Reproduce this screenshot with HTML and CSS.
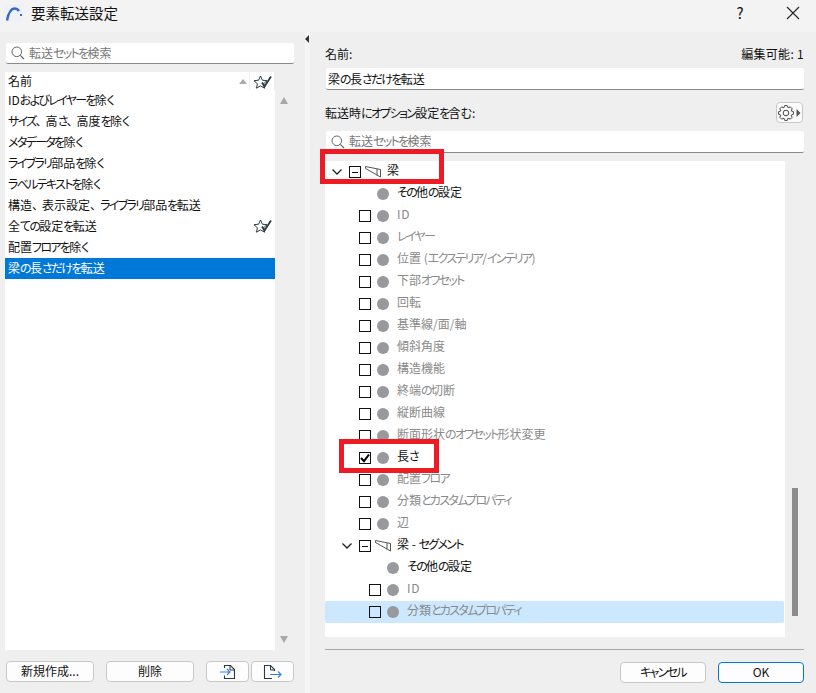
FILE: index.html
```html
<!DOCTYPE html>
<html lang="ja">
<head>
<meta charset="utf-8">
<title>要素転送設定</title>
<link rel="stylesheet" href="styles.css">
</head>
<body>
<div class="dialog">
  <header class="titlebar">
    <svg class="logo" width="18" height="18" viewBox="0 0 18 18"><rect width="18" height="18" fill="#eef1f8"/><path d="M2 16.500C3.500 9 6 4.500 9.500 4.500c2 0 3.500 1 4.500 2.500" fill="none" stroke="#3a66c4" stroke-width="2.400"/><rect x="15" y="10" width="2" height="2" fill="#3a66c4"/></svg>
    <span class="title">要素転送設定</span>
    <span class="help">?</span>
    <svg class="close" width="14" height="14" viewBox="0 0 14 14"><path d="M1 1l12 12M13 1L1 13" stroke="#222" stroke-width="1.100" fill="none"/></svg>
  </header>
  <main class="main">
    <section class="left">
      <div class="search left-search">
        <svg class="mag" width="14" height="14" viewBox="0 0 14 14"><circle cx="5.800" cy="5.800" r="4.800" fill="none" stroke="#666"/><path d="M9.300 9.300L13 13" stroke="#666" stroke-width="1.200"/></svg>
        <span>転送<span class="k">セットを</span>検索</span>
      </div>
      <div class="list-wrap">
        <div class="list-head">
          <div class="head-name"><span>名前</span><i class="sort"></i></div>
          <div class="head-star">
            <svg width="20" height="14" viewBox="0 0 20 14"><path d="M7.500 1l1.900 4.200 4.600.5-3.400 3 .9 4.500-4-2.300-4 2.300.9-4.500-3.400-3 4.600-.5z" fill="#fff" stroke="#2b3a42"/><path d="M9 7.500l2.500 4L18 1.500" fill="none" stroke="#2b3a42" stroke-width="1.800"/></svg>
          </div>
        </div>
        <div class="list-body-row">
          <ul class="list">
            <li><span>ID<span class="k">およびレイヤーを</span>除<span class="k">く</span></span></li>
            <li><span><span class="k">サイズ</span><span class="c">、</span>高<span class="k">さ</span><span class="c">、</span>高度<span class="k">を</span>除<span class="k">く</span></span></li>
            <li><span><span class="k">メタデータを</span>除<span class="k">く</span></span></li>
            <li><span><span class="k">ライブラリ</span>部品<span class="k">を</span>除<span class="k">く</span></span></li>
            <li><span><span class="k">ラベルテキストを</span>除<span class="k">く</span></span></li>
            <li><span>構造<span class="c">、</span>表示設定<span class="c">、</span><span class="k">ライブラリ</span>部品<span class="k">を</span>転送</span></li>
            <li class="with-star"><span>全<span class="k">ての</span>設定<span class="k">を</span>転送</span>
              <svg width="20" height="14" viewBox="0 0 20 14"><path d="M7.500 1l1.900 4.200 4.600.5-3.400 3 .9 4.500-4-2.300-4 2.300.9-4.500-3.400-3 4.600-.5z" fill="#fff" stroke="#2b3a42"/><path d="M9 7.500l2.500 4L18 1.500" fill="none" stroke="#2b3a42" stroke-width="1.800"/></svg>
            </li>
            <li><span>配置<span class="k">フロアを</span>除<span class="k">く</span></span></li>
            <li class="selected"><span>梁<span class="k">の</span>長<span class="k">さだけを</span>転送</span></li>
          </ul>
          <div class="list-scroll"><i class="arrow-up"></i><i class="arrow-down"></i></div>
        </div>
      </div>
      <div class="left-buttons">
        <button class="btn btn-wide"><span class="t">新規作成...</span></button>
        <button class="btn btn-wide btn-del"><span class="t">削除</span></button>
        <button class="btn btn-icon btn-import">
          <svg width="18" height="16" viewBox="0 0 18 16"><path d="M5.500 4V1.500h6l4 4v9h-10v-3" fill="none" stroke="#2b3a42" stroke-width="1.100"/><path d="M11 1.500v4.500h4.500" fill="none" stroke="#2b3a42"/><path d="M1 8h10M8 5l3 3-3 3" fill="none" stroke="#2f80ed" stroke-width="1.100"/></svg>
        </button>
        <button class="btn btn-icon">
          <svg width="20" height="16" viewBox="0 0 20 16"><path d="M9 14.500H1.500v-13h6l4 4v1.500" fill="none" stroke="#2b3a42" stroke-width="1.100"/><path d="M7.500 1.500V6H12" fill="none" stroke="#2b3a42"/><path d="M7 10.500h11M15 7.500l3 3-3 3" fill="none" stroke="#2f80ed" stroke-width="1.100"/></svg>
        </button>
      </div>
    </section>
    <div class="splitter"><i class="split-arrow"></i></div>
    <section class="right">
      <div class="name-line"><span>名前:</span><span class="editable">編集可能: 1</span></div>
      <div class="field">梁<span class="k">の</span>長<span class="k">さだけを</span>転送</div>
      <div class="option-line">
        <span>転送時<span class="k">にオプション</span>設定<span class="k">を</span>含む:</span>
        <button class="gear">
          <svg width="24" height="16" viewBox="0 0 24 16"><polygon transform="translate(8 8)" points="7.390,-1.300 7.390,1.300 5.170,2.140 6.140,4.300 4.300,6.140 2.140,5.170 1.300,7.390 -1.300,7.390 -2.140,5.170 -4.300,6.140 -6.140,4.300 -5.170,2.140 -7.390,1.300 -7.390,-1.300 -5.170,-2.140 -6.140,-4.300 -4.300,-6.140 -2.140,-5.170 -1.300,-7.390 1.300,-7.390 2.140,-5.170 4.300,-6.140 6.140,-4.300 5.170,-2.140" fill="none" stroke="#444"/><circle cx="8" cy="8" r="2.800" fill="none" stroke="#444"/><path d="M18.500 4l4 4-4 4z" fill="#555"/></svg>
        </button>
      </div>
      <div class="search right-search">
        <svg class="mag" width="14" height="14" viewBox="0 0 14 14"><circle cx="5.800" cy="5.800" r="4.800" fill="none" stroke="#666"/><path d="M9.300 9.300L13 13" stroke="#666" stroke-width="1.200"/></svg>
        <span class="t">転送<span class="k">セットを</span>検索</span>
      </div>
      <div class="tree-line">
        <div class="tree">
          <div class="row l0"><svg class="chev" width="12" height="8" viewBox="0 0 12 8"><path d="M1.500 1.500L6 6l4.500-4.500" fill="none" stroke="#222" stroke-width="1.300"/></svg><span class="box minus"></span><svg class="beam" width="16" height="12" viewBox="0 0 16 12"><path d="M.5.500L15.500 3.500V11L.5 2.500zM12 3v6.500" fill="none" stroke="#555"/></svg><span class="t on">梁</span></div>
          <div class="row l1"><span class="nobox"></span><i class="dot"></i><span class="t on"><span class="k">その</span>他<span class="k">の</span>設定</span></div>
          <div class="row l1"><span class="box"></span><i class="dot"></i><span class="t id">ID</span></div>
          <div class="row l1"><span class="box"></span><i class="dot"></i><span class="t k">レイヤー</span></div>
          <div class="row l1"><span class="box"></span><i class="dot"></i><span class="t">位置 (<span class="k">エクステリア</span>/<span class="k">インテリア</span>)</span></div>
          <div class="row l1"><span class="box"></span><i class="dot"></i><span class="t">下部<span class="k">オフセット</span></span></div>
          <div class="row l1"><span class="box"></span><i class="dot"></i><span class="t">回転</span></div>
          <div class="row l1"><span class="box"></span><i class="dot"></i><span class="t">基準線/面/軸</span></div>
          <div class="row l1"><span class="box"></span><i class="dot"></i><span class="t">傾斜角度</span></div>
          <div class="row l1"><span class="box"></span><i class="dot"></i><span class="t">構造機能</span></div>
          <div class="row l1"><span class="box"></span><i class="dot"></i><span class="t">終端<span class="k">の</span>切断</span></div>
          <div class="row l1"><span class="box"></span><i class="dot"></i><span class="t">縦断曲線</span></div>
          <div class="row l1"><span class="box"></span><i class="dot"></i><span class="t">断面形状<span class="k">のオフセット</span>形状変更</span></div>
          <div class="row l1"><span class="box"><svg width="10" height="10" viewBox="0 0 10 10"><path d="M1 5l3 3.200L9 1.500" fill="none" stroke="#000" stroke-width="2"/></svg></span><i class="dot"></i><span class="t on">長<span class="k">さ</span></span></div>
          <div class="row l1"><span class="box"></span><i class="dot"></i><span class="t">配置<span class="k">フロア</span></span></div>
          <div class="row l1"><span class="box"></span><i class="dot"></i><span class="t">分類<span class="k">とカスタムプロパティ</span></span></div>
          <div class="row l1"><span class="box"></span><i class="dot"></i><span class="t">辺</span></div>
          <div class="row l0b"><svg class="chev" width="12" height="8" viewBox="0 0 12 8"><path d="M1.500 1.500L6 6l4.500-4.500" fill="none" stroke="#222" stroke-width="1.300"/></svg><span class="box minus"></span><svg class="beam" width="16" height="12" viewBox="0 0 16 12"><path d="M.5.500L15.500 3.500V11L.5 2.500zM12 3v6.500" fill="none" stroke="#555"/></svg><span class="t on">梁 - <span class="k">セグメント</span></span></div>
          <div class="row l2"><span class="nobox"></span><i class="dot"></i><span class="t on"><span class="k">その</span>他<span class="k">の</span>設定</span></div>
          <div class="row l2"><span class="box"></span><i class="dot"></i><span class="t id">ID</span></div>
          <div class="row l2 hl"><span class="box"></span><i class="dot"></i><span class="t">分類<span class="k">とカスタムプロパティ</span></span></div>
        </div>
        <div class="tree-scroll"><div class="thumb"></div></div>
      </div>
      <hr class="sep">
      <div class="actions">
        <button class="btn act"><span class="t k">キャンセル</span></button>
        <button class="btn act ok"><span class="t">OK</span></button>
      </div>
    </section>
  </main>
  <div class="mark mark-a"></div>
  <div class="mark mark-b"></div>
</div>
</body>
</html>
```
FILE: styles.css
```css
* { box-sizing: border-box; }
html, body { margin: 0; padding: 0; }
body {
  width: 816px;
  height: 693px;
  overflow: hidden;
  background: #efefef;
  color: #111;
  font: 12px/16px "Noto Sans CJK JP", "Noto Sans", sans-serif;
  font-feature-settings: "palt" 1;
}
.k { letter-spacing: -1.700px; }
.c { font-feature-settings: normal; letter-spacing: -2px; }
.id { letter-spacing: .8px; }
.t { margin-top: -2px; }
.row .t { margin-top: -4px; }
.dialog { position: relative; width: 816px; height: 693px; }
.titlebar {
  height: 32px;
  background: #f3f3f3;
  display: flex;
  align-items: center;
  padding: 0 0 6px 5px;
}
.logo { margin-right: 8px; }
.title { font-size: 14.500px; flex: 1; }
.help { font-size: 15px; width: 20px; text-align: center; margin-right: 36px; }
.close { margin-right: 16px; }
.main { display: flex; height: 661px; }
.left { width: 305px; padding: 11px 0 0 5px; }
.search {
  height: 22px;
  background: #fff;
  border-bottom: 1px solid #8a8a8a;
  border-radius: 2px;
  display: flex;
  align-items: center;
  padding-left: 5px;
  gap: 4px;
  color: #777;
}
.left-search { width: 288px; margin-left: 1px; height: 21px; }
.list-wrap { margin-top: 8px; }
.list-head { display: flex; height: 18px; }
.head-name {
  width: 244px;
  background: #fff;
  display: flex;
  align-items: center;
  justify-content: space-between;
  padding: 0 1px 0 3px;
}
.sort {
  width: 0; height: 0;
  margin-right: 1px;
  border: 4.500px solid transparent;
  border-top: 0;
  border-bottom: 5px solid #aaa;
}
.head-star {
  width: 24px;
  margin-left: 1px;
  background: #fff;
  padding: 3px 0 0 3px;
  line-height: 0;
}
.list-body-row { display: flex; }
.list {
  list-style: none;
  margin: 0;
  padding: 0;
  width: 270px;
  height: 560px;
  background: #fff;
}
.list li { height: 21px; padding: 0 0 2px 3px; display: flex; justify-content: space-between; align-items: center; }
.with-star svg { margin-right: 2px; }
.list .selected { background: #0078d7; color: #fff; }
.list-scroll {
  width: 18px;
  height: 560px;
  display: flex;
  flex-direction: column;
  justify-content: space-between;
  align-items: center;
  padding: 7px 0 7px;
}
.list-scroll i { width: 0; height: 0; border: 4.500px solid transparent; }
.list-scroll .arrow-up { border-top: 0; border-bottom: 7px solid #a8a8a8; }
.list-scroll .arrow-down { border-bottom: 0; border-top: 7px solid #a8a8a8; }
.left-buttons { display: flex; margin: 11px 0 0 1px; height: 21px; }
.btn {
  font: inherit;
  font-feature-settings: inherit;
  color: #111;
  background: #fdfdfd;
  border: 1px solid #c8c8c8;
  border-radius: 4px;
  padding: 0;
  height: 21px;
  display: flex;
  align-items: center;
  justify-content: center;
}
.btn-wide { width: 88px; }
.btn-del { margin-left: 12px; }
.btn-icon { width: 43px; margin-left: 2px; }
.btn-import { margin-left: 12px; }
.splitter { width: 5px; background: #f5f5f5; position: relative; }
.split-arrow {
  position: absolute;
  top: 3px;
  left: 0;
  width: 0; height: 0;
  border: 4px solid transparent;
  border-left: 0;
  border-right: 4px solid #333;
}
.right { width: 506px; padding: 14px 12px 0 15px; }
.name-line { display: flex; justify-content: space-between; height: 16px; }
.editable { letter-spacing: .3px; }
.field {
  margin: 6px 0 0 1px;
  height: 22px;
  line-height: 21px;
  background: #fff;
  border-bottom: 1px solid #8a8a8a;
  border-radius: 2px;
  padding-left: 2px;
}
.option-line { display: flex; justify-content: space-between; align-items: center; height: 21px; margin-top: 12px; }
.gear {
  width: 27px;
  height: 21px;
  padding: 1px;
  background: #fbfbfb;
  border: 1px solid #c8c8c8;
  border-radius: 4px;
  line-height: 0;
  margin-right: 1px;
}
.right-search { margin: 8px 0 0 1px; }
.tree-line { display: flex; margin-top: 8px; }
.tree { width: 460px; height: 476px; background: #fff; }
.row { height: 22px; display: flex; align-items: center; color: #8a8a8a; }
.l0 { padding-left: 6px; }
.l0b { padding-left: 16px; }
.l1 { padding-left: 34px; }
.l2 { padding-left: 44px; }
.chev { width: 12px; margin-right: 6px; }
.box {
  width: 12px;
  height: 12px;
  border: 1px solid #111;
  flex: none;
  display: flex;
  align-items: center;
  justify-content: center;
}
.minus::after { content: ""; width: 6px; height: 1px; background: #111; }
.beam { margin: 0 6px 0 4px; }
.nobox { width: 12px; }
.dot { width: 12px; height: 12px; border-radius: 50%; background: #97999c; margin: 0 8px 0 6px; }
.on { color: #111; }
.hl { background: #cce8ff; border-radius: 2px; width: 459px; }
.tree-scroll { width: 19px; }
.thumb { margin: 327px 0 0 7px; width: 6px; height: 128px; background: #8c8c8c; }
.sep { margin: 12px 0 0 0; border: 0; border-top: 1px solid #a8a8a8; height: 0; }
.actions { display: flex; justify-content: flex-end; gap: 12px; margin-top: 12px; }
.act { width: 86px; height: 21px; }
.ok { border-color: #0078d7; }
.mark { position: absolute; border: 5px solid #ed1c24; }
.mark-a { left: 320px; top: 149px; width: 124px; height: 35px; }
.mark-b { left: 339px; top: 439px; width: 100px; height: 34px; }
```
